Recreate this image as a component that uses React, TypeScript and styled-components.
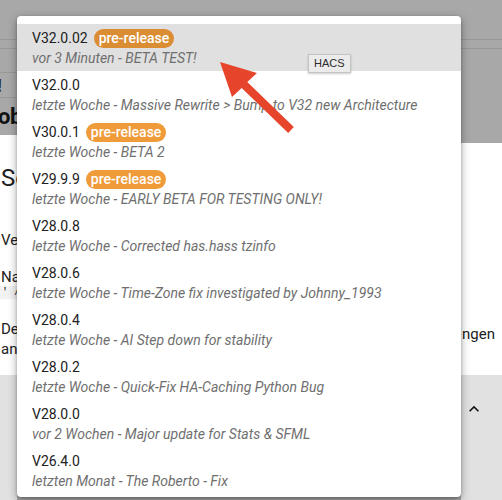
import React from "react";
import styled, { createGlobalStyle } from "styled-components";

const releases = [
  { version: "V32.0.02", pre: true, note: "vor 3 Minuten - BETA TEST!" },
  {
    version: "V32.0.0",
    pre: false,
    note: "letzte Woche - Massive Rewrite > Bump to V32 new Architecture",
  },
  { version: "V30.0.1", pre: true, note: "letzte Woche - BETA 2" },
  { version: "V29.9.9", pre: true, note: "letzte Woche - EARLY BETA FOR TESTING ONLY!" },
  { version: "V28.0.8", pre: false, note: "letzte Woche - Corrected has.hass tzinfo" },
  {
    version: "V28.0.6",
    pre: false,
    note: "letzte Woche - Time-Zone fix investigated by Johnny_1993",
  },
  { version: "V28.0.4", pre: false, note: "letzte Woche - AI Step down for stability" },
  { version: "V28.0.2", pre: false, note: "letzte Woche - Quick-Fix HA-Caching Python Bug" },
  { version: "V28.0.0", pre: false, note: "vor 2 Wochen - Major update for Stats & SFML" },
  { version: "V26.4.0", pre: false, note: "letzten Monat - The Roberto - Fix" },
];

const GlobalStyle = createGlobalStyle`
  html, body {
    margin: 0;
    padding: 0;
    background: #a8a8a8;
  }
  body {
    font-family: Roboto, "Noto Sans", sans-serif;
    overflow: hidden;
  }
`;

export default function App() {
  return (
    <>
      <GlobalStyle />
      <Page>
        {/* dimmed dialog behind the dropdown, only its edges show */}
        <SideColumn $width={17}>
          <Band $height={39} $line />
          <Band $height={8} $line />
          <Band $height={23} $line />
          <Band $height={24} $line>
            <Bang>!</Bang>
          </Band>
          <Band $height={37}>
            <TitleFragment>ob</TitleFragment>
          </Band>
          <DialogBody $height={240}>
            <HeadingFragment>Se</HeadingFragment>
            <LabelFragment $gap={39}>Ve</LabelFragment>
            <LabelFragment $gap={19}>Na</LabelFragment>
            <CodeFragment>' /</CodeFragment>
            <ParagraphFragment>
              De
              <br />
              an
            </ParagraphFragment>
          </DialogBody>
          <FooterBand />
        </SideColumn>

        <Spacer />

        <SideColumn $width={41}>
          <Band $height={39} $line />
          <Band $height={8} $line />
          <Band $height={94} />
          <DialogBody $height={232}>
            <RightFragment>ngen</RightFragment>
          </DialogBody>
          <FooterBand>
            <Chevron viewBox="0 0 24 24">
              <path d="M7.41 15.41L12 10.83l4.59 4.58L18 14l-6-6-6 6z" />
            </Chevron>
          </FooterBand>
        </SideColumn>

        <Menu>
          {releases.map((r, i) => (
            <MenuItem key={r.version} $active={i === 0}>
              <VersionLine>
                {r.version}
                {r.pre && <Badge $active={i === 0}>pre-release</Badge>}
              </VersionLine>
              <Note>{r.note}</Note>
            </MenuItem>
          ))}
        </Menu>

        <Tooltip>HACS</Tooltip>

        <Arrow viewBox="0 0 502 500">
          <polygon points="220,62 257,73 247.3,82.1 293.8,127.1 288.2,132.9 241.7,87.9 232,97" />
        </Arrow>
      </Page>
    </>
  );
}

const Page = styled.div`
  position: relative;
  width: 502px;
  height: 500px;
  overflow: hidden;
  display: flex;
  background: #a8a8a8;
`;

const SideColumn = styled.div<{ $width: number }>`
  width: ${(p) => p.$width}px;
  flex: none;
  display: flex;
  flex-direction: column;
  overflow: hidden;
`;

const Spacer = styled.div`
  flex: 1;
`;

const Band = styled.div<{ $height: number; $line?: boolean }>`
  height: ${(p) => p.$height}px;
  flex: none;
  background: #a8a8a8;
  border-bottom: ${(p) => (p.$line ? "1px solid #989898" : "none")};
  display: flex;
  align-items: center;
`;

const Bang = styled.span`
  font-size: 18px;
  font-weight: 700;
  color: #2a2a2a;
  margin-left: -3px;
`;

const TitleFragment = styled.span`
  font-size: 22px;
  font-weight: 700;
  color: #111;
  margin-left: -2px;
  letter-spacing: -0.5px;
`;

const DialogBody = styled.div<{ $height: number }>`
  height: ${(p) => p.$height}px;
  flex: none;
  background: #fff;
  display: flex;
  flex-direction: column;
  color: #212121;
  white-space: nowrap;
`;

const HeadingFragment = styled.div`
  margin-top: 29px;
  font-size: 24px;
  line-height: 28px;
  padding-left: 1px;
`;

const LabelFragment = styled.div<{ $gap: number }>`
  margin-top: ${(p) => p.$gap}px;
  font-size: 15px;
  line-height: 18px;
  padding-left: 1px;
`;

const CodeFragment = styled.div`
  font-family: "Liberation Mono", monospace;
  font-size: 10px;
  line-height: 13px;
  background: #f2f2f2;
  padding-left: 2px;
`;

const ParagraphFragment = styled.div`
  margin-top: 20px;
  font-size: 15px;
  line-height: 20px;
  padding-left: 1px;
`;

const RightFragment = styled.div`
  margin-top: 181px;
  font-size: 15px;
  line-height: 20px;
  padding-left: 1px;
`;

const FooterBand = styled.div`
  flex: 1;
  background: #e1e1e1;
`;

const Chevron = styled.svg`
  width: 20px;
  height: 20px;
  fill: #111;
  margin: 24px 0 0 3px;
  display: block;
`;

const Menu = styled.div`
  position: absolute;
  left: 17px;
  top: 16px;
  width: 444px;
  padding: 8px 0 3px;
  background: #fff;
  border-radius: 4px;
  box-shadow: 0 3px 10px rgba(0, 0, 0, 0.35), 0 1px 3px rgba(0, 0, 0, 0.2);
`;

const MenuItem = styled.div<{ $active: boolean }>`
  height: 47px;
  box-sizing: border-box;
  padding: 4px 15px 3px;
  background: ${(p) => (p.$active ? "#e0e0e0" : "transparent")};
`;

const VersionLine = styled.div`
  display: flex;
  align-items: center;
  gap: 6px;
  height: 20px;
  font-size: 14px;
  color: #212121;
`;

const Badge = styled.span<{ $active: boolean }>`
  background: ${(p) => (p.$active ? "#da8d33" : "#f09b3a")};
  color: #fff;
  font-size: 14px;
  font-weight: 500;
  line-height: 19px;
  padding: 0 5px;
  border-radius: 10px;
`;

const Note = styled.div`
  height: 20px;
  line-height: 20px;
  font-size: 14px;
  font-style: italic;
  color: #6f6f6f;
  white-space: nowrap;
`;

const Tooltip = styled.div`
  position: absolute;
  left: 308px;
  top: 54px;
  height: 19px;
  box-sizing: border-box;
  padding: 0 5px;
  background: #ebebeb;
  border: 1px solid #c4c4c4;
  box-shadow: 0 1px 2px rgba(0, 0, 0, 0.2);
  font-family: "Liberation Sans", Arial, sans-serif;
  font-size: 11px;
  line-height: 17px;
  color: #2b2b2b;
`;

const Arrow = styled.svg`
  position: absolute;
  left: 0;
  top: 0;
  width: 502px;
  height: 500px;
  pointer-events: none;
  fill: #e6442b;
`;
